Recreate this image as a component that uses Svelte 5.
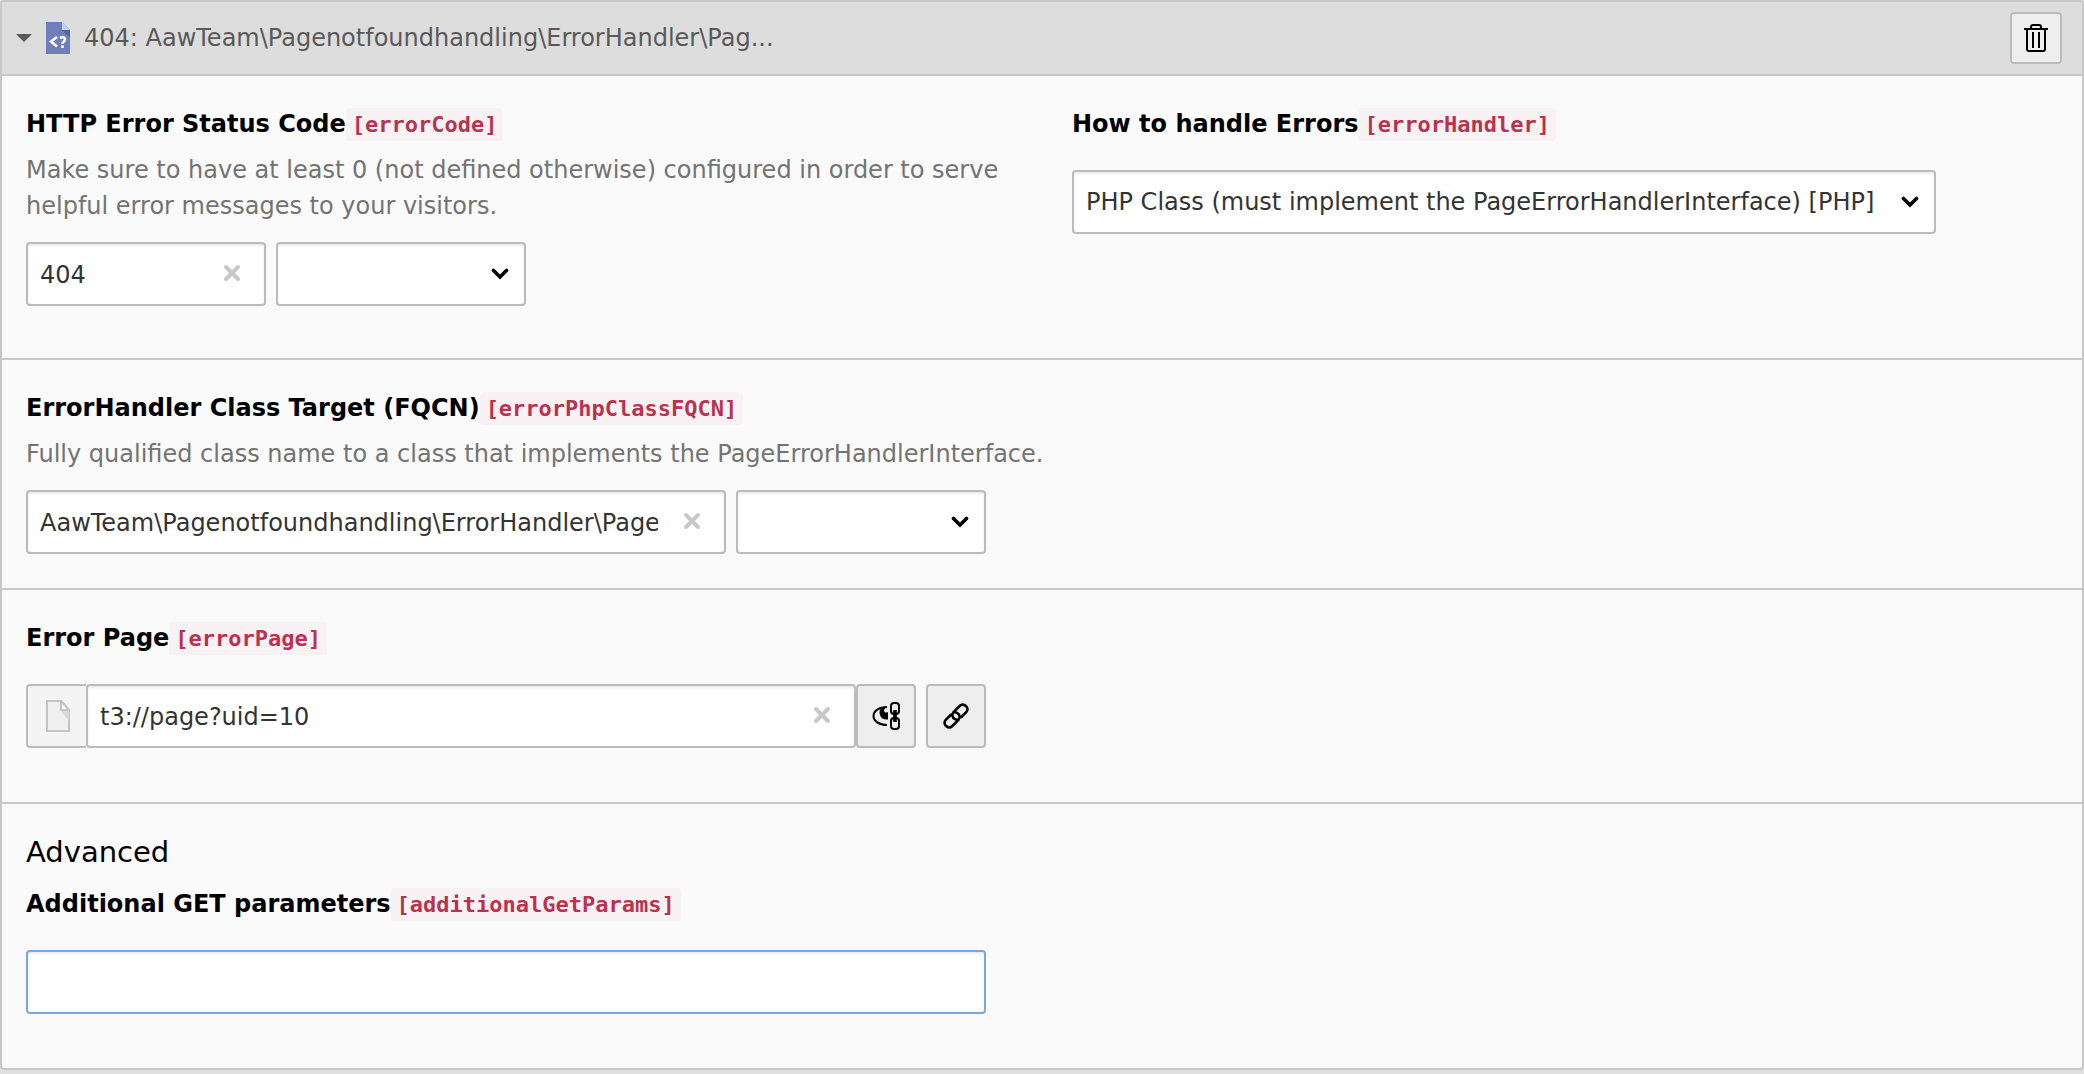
<script>
  let errorCode = $state('404');
  let className = $state('AawTeam\\Pagenotfoundhandling\\ErrorHandler\\PageErrorHandler');
  let errorPage = $state('t3://page?uid=10');
  let params = $state('');
</script>

{#snippet clear(reset)}
  <button class="clear" type="button" aria-label="Clear input" onclick={reset}>
    <svg viewBox="0 0 18 18" width="18" height="18"><path d="M3 3l12 12M15 3L3 15" stroke="#c8c8c8" stroke-width="4" stroke-linecap="round" /></svg>
  </button>
{/snippet}

{#snippet arrow()}
  <svg class="arrow" viewBox="0 0 18 12" width="18" height="12"><path d="M2.500 2.500L9 9l6.500-6.500" fill="none" stroke="#000" stroke-width="3.600" stroke-linecap="round" /></svg>
{/snippet}

<main class="panel">
  <header>
    <button class="toggle" type="button" aria-expanded="true">
      <svg viewBox="0 0 16 8" width="16" height="8"><path d="M0 0h16L8 8z" fill="#595959" /></svg>
      <svg viewBox="0 0 24 32" width="24" height="32">
        <path d="M0 0h16l8 8v24H0z" fill="#6f7fba" />
        <path d="M16 8h8v8z" fill="#55659f" />
        <path d="M16 0l8 8h-8z" fill="#c9d0ea" />
        <path d="M11 15l-6 4.500 6 5" fill="none" stroke="#fff" stroke-width="2.600" />
        <path d="M14 16c2-1.500 5-1 5 1.500 0 2-2.600 2.200-2.600 4.500M16.400 23.300v2.600" fill="none" stroke="#fff" stroke-width="2.600" />
      </svg>
      <span>404: AawTeam\Pagenotfoundhandling\ErrorHandler\Pag...</span>
    </button>
    <button class="btn trash" type="button" aria-label="Delete">
      <svg viewBox="0 0 24 28" width="24" height="28" fill="none" stroke="#000" stroke-width="2">
        <path d="M0 5h24M7 5V3q0-2 2-2h6q2 0 2 2v2M3 5v20q0 2 2 2h14q2 0 2-2V5M9 8v16M15 8v16" />
      </svg>
    </button>
  </header>

  <section class="columns">
    <div>
      <label for="code">HTTP Error Status Code<code>[errorCode]</code></label>
      <p>Make sure to have at least 0 (not defined otherwise) configured in order to serve helpful error messages to your visitors.</p>
      <div class="row">
        <div class="field short"><input id="code" type="text" bind:value={errorCode} />{@render clear(() => (errorCode = ''))}</div>
        <div class="field preset"><select aria-label="Status code presets"><option></option></select>{@render arrow()}</div>
      </div>
    </div>
    <div>
      <label for="handler">How to handle Errors<code>[errorHandler]</code></label>
      <div class="field handler spaced">
        <select id="handler"><option>PHP Class (must implement the PageErrorHandlerInterface) [PHP]</option></select>{@render arrow()}
      </div>
    </div>
  </section>

  <section class="tight">
    <label for="fqcn">ErrorHandler Class Target (FQCN)<code>[errorPhpClassFQCN]</code></label>
    <p>Fully qualified class name to a class that implements the PageErrorHandlerInterface.</p>
    <div class="row">
      <div class="field grow"><input id="fqcn" type="text" bind:value={className} />{@render clear(() => (className = ''))}</div>
      <div class="field preset"><select aria-label="Class presets"><option></option></select>{@render arrow()}</div>
    </div>
  </section>

  <section>
    <label for="page">Error Page<code>[errorPage]</code></label>
    <div class="row spaced link">
      <span class="addon">
        <svg viewBox="0 0 24 32" width="24" height="32">
          <path d="M1 1h14l8 9v21H1z" fill="#f0f0f0" stroke="#c4c4c4" stroke-width="2" />
          <path d="M14 10h9v11z" fill="#dadada" />
          <path d="M15 1v9h8z" fill="#fff" stroke="#c4c4c4" stroke-width="2" />
        </svg>
      </span>
      <div class="field grow"><input id="page" type="text" bind:value={errorPage} />{@render clear(() => (errorPage = ''))}</div>
      <button class="btn" type="button" aria-label="Toggle link explanation">
        <svg viewBox="0 0 28 28" width="28" height="28" fill="none" stroke="#000" stroke-width="2">
          <path d="M15 5C7 5 1.500 9 1.500 14S7 23 15 23" />
          <path d="M10 5C7.500 7 7 10 8 13c1 3.500 4 5 8 4.500V10q-3 1.500-4-1 0-2 2-4z" fill="#000" stroke="none" />
          <rect x="19" y="1" width="8" height="11" rx="3" /><rect x="19" y="16" width="8" height="11" rx="3" />
          <path d="M23 8v12" stroke-width="3.600" />
        </svg>
      </button>
      <button class="btn apart" type="button" aria-label="Open link browser">
        <svg viewBox="0 0 26 26" width="26" height="26" fill="none" stroke="#000" stroke-width="2.600">
          <g transform="translate(13 13) rotate(-45)">
            <path d="M2 4.500H10a4 4 0 0 0 4-4v-1a4 4 0 0 0-4-4H1a4.500 4.500 0 0 0-4 6q.6 1.800 2 2.400" />
            <path d="M-2-4.500H-10a4 4 0 0 0-4 4v1a4 4 0 0 0 4 4h9a4.500 4.500 0 0 0 4-6q-.6-1.800-2-2.400" />
          </g>
        </svg>
      </button>
    </div>
  </section>

  <section>
    <h2>Advanced</h2>
    <label for="params">Additional GET parameters<code>[additionalGetParams]</code></label>
    <div class="row spaced"><div class="field grow"><input id="params" class="active" type="text" bind:value={params} /></div></div>
  </section>
</main>

<style>
  :global(body) { margin: 0; background: #e0e0e0; }
  .panel, .panel * { box-sizing: border-box; }
  .panel {
    border: 2px solid #c8c8c8;
    border-radius: 4px;
    background: #fafafa;
    color: #000;
    font-family: Verdana, "DejaVu Sans", sans-serif;
    font-size: 24px;
    line-height: 36px;
  }
  header {
    display: flex;
    align-items: center;
    justify-content: space-between;
    height: 74px;
    padding: 0 20px 0 14px;
    background: #ddd;
    border-bottom: 2px solid #c8c8c8;
  }
  button, input, select { font: inherit; color: inherit; }
  svg { display: block; flex: none; }
  .toggle {
    display: flex;
    align-items: center;
    gap: 14px;
    padding: 0;
    border: 0;
    background: none;
    color: #595959;
  }
  .btn {
    display: flex;
    flex: none;
    align-items: center;
    justify-content: center;
    width: 60px;
    height: 64px;
    padding: 0;
    border: 2px solid #bbb;
    border-radius: 4px;
    background: #eee;
  }
  .trash { width: 52px; height: 52px; }
  section { padding: 30px 24px 54px; }
  section + section { border-top: 2px solid #c8c8c8; }
  .columns { display: grid; grid-template-columns: 1fr 1fr; gap: 60px; padding-bottom: 52px; }
  .tight { padding-bottom: 34px; }
  label { display: block; font-weight: bold; }
  code {
    padding: 4px 6px;
    border-radius: 4px;
    background: #f9f2f4;
    color: #b9324f;
    font-family: "DejaVu Sans Mono", monospace;
    font-size: 22px;
    line-height: 24px;
  }
  p { margin: 10px 0 18px; color: #737373; }
  h2 { margin: 0 0 16px; font-size: 29px; font-weight: normal; line-height: 36px; }
  .row { display: flex; gap: 10px; max-width: 960px; }
  .link { gap: 0; }
  .spaced { margin-top: 28px; }
  .field { position: relative; min-width: 0; }
  .grow { flex: 1; }
  .short { width: 240px; }
  .preset { width: 250px; flex: none; }
  .handler { max-width: 864px; }
  input, select {
    display: block;
    width: 100%;
    height: 64px;
    border: 2px solid #bbb;
    border-radius: 4px;
    outline: 0;
    background: #fff;
    color: #333;
    box-shadow: inset 0 2px 2px rgba(0, 0, 0, 0.08);
  }
  input { padding: 2px 66px 0 12px; }
  select { appearance: none; padding: 0 40px 0 12px; }
  .active { border-color: #78a7de; }
  .clear {
    position: absolute;
    top: 22px;
    right: 25px;
    padding: 0;
    border: 0;
    background: none;
  }
  .arrow { position: absolute; top: 26px; right: 17px; pointer-events: none; }
  .addon {
    display: flex;
    align-items: center;
    justify-content: center;
    width: 60px;
    padding-left: 2px;
    border: 2px solid #bbb;
    border-right: 0;
    border-radius: 4px 0 0 4px;
    background: #f4f4f4;
  }
  .apart { margin-left: 10px; }
</style>
